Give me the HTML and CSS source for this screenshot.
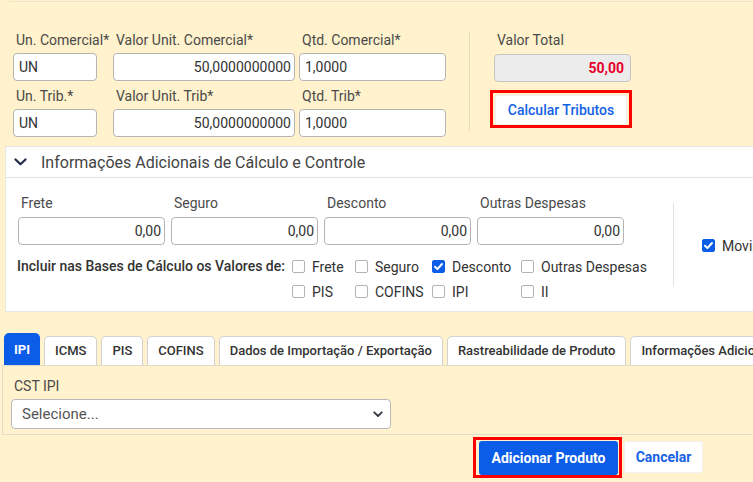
FILE: index.html
```html
<!DOCTYPE html>
<html>
<head>
	<title>Produto</title>
	<link rel="stylesheet" href="styles.css">
</head>
<body>
	<div class="page">
		<div class="topline"></div>

		<section class="prod-top">
			<div class="fields">
				<div class="fld"><label>Un. Comercial*</label><input class="w-un" value="UN"></div>
				<div class="fld"><label>Valor Unit. Comercial*</label><input class="w-val num" value="50,0000000000"></div>
				<div class="fld"><label>Qtd. Comercial*</label><input class="w-qtd" value="1,0000"></div>
				<div class="fld"><label>Un. Trib.*</label><input class="w-un" value="UN"></div>
				<div class="fld"><label>Valor Unit. Trib*</label><input class="w-val num" value="50,0000000000"></div>
				<div class="fld"><label>Qtd. Trib*</label><input class="w-qtd" value="1,0000"></div>
			</div>
			<div class="vsep"></div>
			<div class="total-col">
				<label>Valor Total</label>
				<input class="total" value="50,00" readonly>
				<span class="mark mark-calc"><button class="btn-light">Calcular Tributos</button></span>
			</div>
		</section>

		<section class="card">
			<div class="card-head">
				<svg class="chev" width="13" height="8" viewBox="0 0 13 8"><path d="M1.5 1.5 L6.5 6.2 L11.5 1.5" fill="none" stroke="#1f2b47" stroke-width="2.2" stroke-linecap="round" stroke-linejoin="round"/></svg>
				<span>Informações Adicionais de Cálculo e Controle</span>
			</div>
			<div class="card-body">
				<div class="calc-left">
					<div class="valores">
						<div class="fld"><label>Frete</label><input class="num" value="0,00"></div>
						<div class="fld"><label>Seguro</label><input class="num" value="0,00"></div>
						<div class="fld"><label>Desconto</label><input class="num" value="0,00"></div>
						<div class="fld"><label>Outras Despesas</label><input class="num" value="0,00"></div>
					</div>
					<div class="incluir">
						<span class="inc-title">Incluir nas Bases de Cálculo os Valores de:</span>
						<div class="cbgrid">
							<label class="chk"><span class="cb"></span>Frete</label>
							<label class="chk"><span class="cb"></span>Seguro</label>
							<label class="chk"><span class="cb on"><svg width="13" height="13" viewBox="0 0 13 13"><path d="M3 6.8 L5.4 9.1 L10 4" fill="none" stroke="#fff" stroke-width="2" stroke-linecap="round" stroke-linejoin="round"/></svg></span>Desconto</label>
							<label class="chk"><span class="cb"></span>Outras Despesas</label>
							<label class="chk"><span class="cb"></span>PIS</label>
							<label class="chk"><span class="cb"></span>COFINS</label>
							<label class="chk"><span class="cb"></span>IPI</label>
							<label class="chk"><span class="cb"></span>II</label>
						</div>
					</div>
				</div>
				<div class="vsep2"></div>
				<div class="calc-right">
					<label class="chk"><span class="cb on"><svg width="13" height="13" viewBox="0 0 13 13"><path d="M3 6.8 L5.4 9.1 L10 4" fill="none" stroke="#fff" stroke-width="2" stroke-linecap="round" stroke-linejoin="round"/></svg></span>Movimenta Estoque</label>
				</div>
			</div>
		</section>

		<ul class="tabs">
			<li class="tab active">IPI</li>
			<li class="tab">ICMS</li>
			<li class="tab">PIS</li>
			<li class="tab">COFINS</li>
			<li class="tab">Dados de Importação / Exportação</li>
			<li class="tab">Rastreabilidade de Produto</li>
			<li class="tab">Informações Adicionais</li>
		</ul>
		<div class="tab-pane">
			<label>CST IPI</label>
			<span class="sel-wrap">
				<select><option>Selecione...</option></select>
				<svg class="sel-arrow" width="10" height="7" viewBox="0 0 10 7"><path d="M1.2 1.3 L5 5 L8.8 1.3" fill="none" stroke="#343a40" stroke-width="1.8" stroke-linecap="round" stroke-linejoin="round"/></svg>
			</span>
		</div>

		<div class="actions">
			<span class="mark mark-add"><button class="btn-primary">Adicionar Produto</button></span>
			<button class="btn-light btn-cancel">Cancelar</button>
		</div>
	</div>
</body>
</html>
```

FILE: styles.css
```css
*{
	margin: 0;
	padding: 0;
	box-sizing: border-box;
	font-family: Roboto, "Liberation Sans", sans-serif;
}
html, body{
	overflow: hidden;
}
body{
	background: #fff2cc;
	color: #444;
	font-size: 14px;
}
.page{
	width: 860px;
}
.topline{
	margin: 1px 0 0 9px;
	border-top: solid 1px #ece3c8;
}
input, select, button{
	font-family: Roboto, "Liberation Sans", sans-serif;
	font-size: 14px;
	outline: none;
}
.fld label{
	display: block;
	line-height: 20px;
	margin-bottom: 3px;
	padding-left: 3px;
	white-space: nowrap;
	color: #4a4a4a;
}
.fld input{
	display: block;
	height: 28px;
	border: solid 1px #b5b5b5;
	border-radius: 4px;
	background: #fff;
	color: #333;
	padding: 0 5px;
}
.fld input.num{
	text-align: right;
	padding-right: 3px;
}

/* quantidades / valores */
.prod-top{
	display: flex;
	margin-top: 28px;
	padding-left: 13px;
}
.fields{
	display: grid;
	grid-template-columns: 100px 186px 147px;
	row-gap: 5px;
}
.w-un{ width: 84px; }
.w-val{ width: 182px; }
.w-qtd{ width: 147px; }
.vsep{
	width: 1px;
	background: #e6dcc0;
	margin: 2px 24px 6px 23px;
}
.total-col{
	display: flex;
	flex-direction: column;
	align-items: flex-start;
}
.total-col label{
	line-height: 20px;
	margin-bottom: 4px;
	padding-left: 3px;
	color: #4a4a4a;
}
.total{
	width: 137px;
	height: 28px;
	border: solid 1px #c4c4c4;
	border-radius: 4px;
	background: #ececec;
	color: #e4002b;
	font-weight: 700;
	text-align: right;
	padding-right: 6px;
}
.mark{
	display: inline-block;
	border: solid 3px #f00;
}
.mark-calc{
	margin: 8px 0 0 -4px;
	padding: 2px 2px 0;
}
.btn-light{
	background: #fff;
	border: solid 1px #f0f0f0;
	border-radius: 3px;
	color: #1562e5;
	font-weight: 500;
	cursor: pointer;
}
.mark-calc .btn-light{
	width: 132px;
	height: 30px;
	display: block;
}

/* card */
.card{
	margin: 9px 0 0 5px;
	background: #fff;
	border: solid 1px #e6e6e6;
}
.card-head{
	display: flex;
	align-items: center;
	height: 31px;
	padding-left: 8px;
	border-bottom: solid 1px #e3e3e3;
	font-size: 16px;
	color: #444;
}
.chev{
	margin-right: 14px;
}
.card-body{
	display: flex;
	padding: 15px 0 7px 12px;
}
.calc-left{
	flex: none;
	width: 655px;
}
.valores{
	display: flex;
	gap: 6px;
}
.valores .fld label{
	margin-bottom: 4px;
}
.valores input{
	width: 147px;
}
.incluir{
	display: flex;
	margin-top: 9px;
}
.inc-title{
	width: 275px;
	line-height: 25px;
	margin-left: -1px;
	font-size: 14px;
	font-weight: 500;
	color: #333;
	white-space: nowrap;
}
.cbgrid{
	display: grid;
	grid-template-columns: 63px 77px 89px auto;
}
.chk{
	display: flex;
	align-items: center;
	height: 25px;
	color: #333;
	white-space: nowrap;
}
.cb{
	display: inline-block;
	flex: none;
	width: 13px;
	height: 13px;
	border: solid 1px #b3b3b3;
	border-radius: 2px;
	background: #fff;
	margin-right: 7px;
}
.cb.on{
	background: #0b5ce6;
	border-color: #0b5ce6;
	position: relative;
}
.cb.on svg{
	position: absolute;
	top: -1px;
	left: -1px;
}
.vsep2{
	flex: none;
	width: 1px;
	height: 84px;
	background: #e3e3e3;
	margin-top: 10px;
}
.calc-right{
	flex: none;
	padding: 40px 0 0 28px;
}

/* abas */
.tabs{
	list-style: none;
	display: flex;
	align-items: flex-end;
	gap: 4px;
	margin: 21px 0 0 4px;
}
.tab{
	flex: none;
	height: 29px;
	line-height: 28px;
	padding: 0 10px;
	background: #fff;
	border: solid 1px #d2d2d2;
	border-bottom: none;
	border-radius: 5px 5px 0 0;
	font-size: 13px;
	font-weight: 500;
	color: #333;
	white-space: nowrap;
}
.tab.active{
	height: 32px;
	line-height: 32px;
	padding: 0 9px;
	background: #0b5ce6;
	border-color: #0b5ce6;
	color: #fff;
	font-weight: 700;
}
.tab-pane{
	margin-left: 2px;
	border: solid 1px #e0dac8;
	padding: 10px 0 5px 8px;
}
.tab-pane label{
	display: block;
	line-height: 20px;
	margin-bottom: 3px;
	padding-left: 3px;
	color: #4a4a4a;
}
.sel-wrap{
	position: relative;
	display: inline-block;
}
.sel-wrap select{
	appearance: none;
	width: 380px;
	height: 30px;
	border: solid 1px #b9b9b9;
	border-radius: 4px;
	background: #fff;
	color: #555;
	font-size: 15px;
	padding-left: 10px;
}
.sel-arrow{
	position: absolute;
	right: 8px;
	top: 12px;
}

/* botões */
.actions{
	display: flex;
	align-items: flex-start;
	gap: 2px;
	margin: 2px 0 0 473px;
}
.mark-add{
	padding: 1px 1px 0 3px;
}
.btn-primary{
	display: block;
	width: 139px;
	height: 34px;
	background: #0b5ce6;
	border: none;
	border-radius: 3px;
	color: #fff;
	font-weight: 700;
	cursor: pointer;
}
.btn-cancel{
	margin-top: 4px;
	width: 79px;
	height: 32px;
	font-weight: 700;
}
```
